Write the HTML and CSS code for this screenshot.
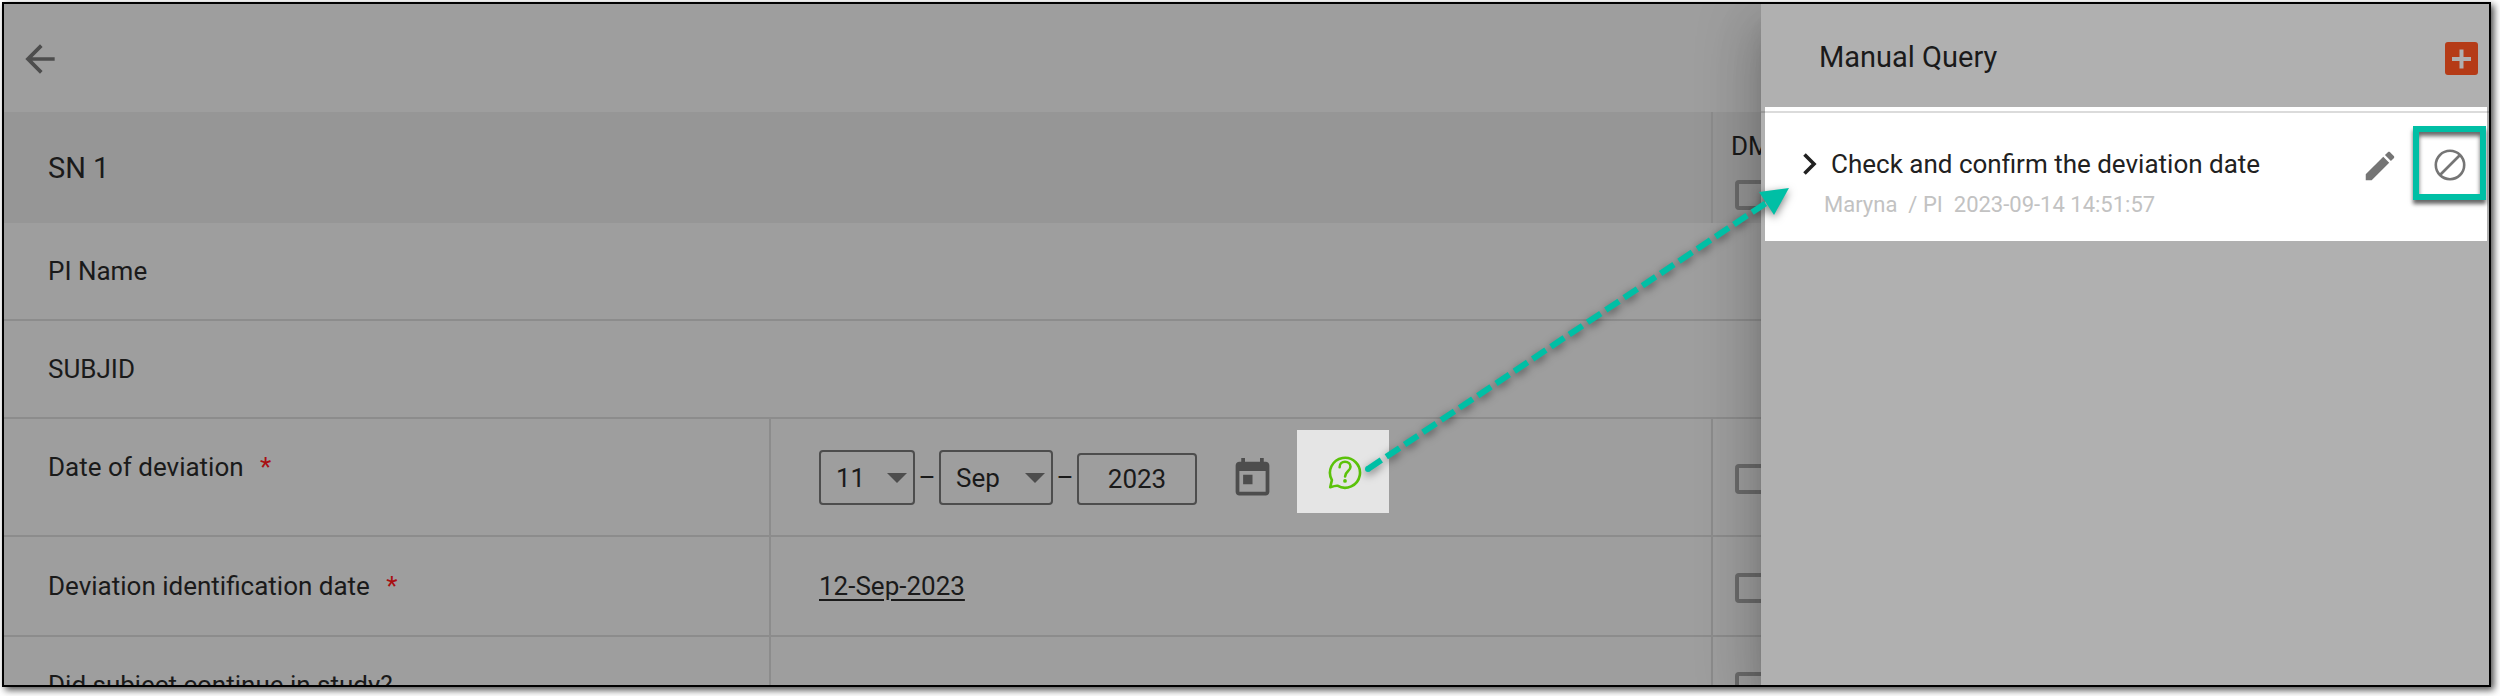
FILE: index.html
```
<!DOCTYPE html>
<html lang="en">
<head>
    <meta charset="UTF-8">
    <meta name="viewport" content="width=device-width, initial-scale=1.0">
    <title>Manual Query</title>
    <link rel="stylesheet" href="styles.css">
</head>
<body>

    <div class="frame">
        <!-- Top bar -->
        <header class="topbar">
            <button class="icon-btn" aria-label="Back">
                <svg width="44" height="44" viewBox="0 0 24 24"><path fill="#4d4d4d" d="M20 11H7.83l5.59-5.59L12 4l-8 8 8 8 1.41-1.41L7.83 13H20v-2z"/></svg>
            </button>
        </header>

        <!-- Form -->
        <table class="form">
            <colgroup>
                <col class="col-label">
                <col>
                <col class="col-dm">
            </colgroup>
            <tr class="row-head">
                <th colspan="2" class="section">SN 1</th>
                <th class="line dm">
                    <label for="dmAll">DM</label>
                    <input type="checkbox" id="dmAll">
                </th>
            </tr>
            <tr>
                <td colspan="3">PI Name</td>
            </tr>
            <tr>
                <td colspan="3">SUBJID</td>
            </tr>
            <tr class="row-date">
                <td class="top">Date of deviation <span class="required">*</span></td>
                <td class="line value">
                    <div class="date-row">
                        <div class="date">
                            <div class="select day">
                                <select aria-label="Day"><option>11</option></select>
                                <svg width="20" height="10" viewBox="0 0 20 10"><path fill="#4d4d4d" d="M0 0h20L10 10z"/></svg>
                            </div>
                            <span class="dash">–</span>
                            <div class="select month">
                                <select aria-label="Month"><option>Sep</option></select>
                                <svg width="20" height="10" viewBox="0 0 20 10"><path fill="#4d4d4d" d="M0 0h20L10 10z"/></svg>
                            </div>
                            <span class="dash">–</span>
                            <input class="year" type="text" value="2023" aria-label="Year">
                        </div>
                        <button class="icon-btn calendar" aria-label="Open calendar">
                            <svg width="45" height="45" viewBox="0 0 24 24"><path fill="#4d4d4d" d="M19 3h-1V1h-2v2H8V1H6v2H5c-1.11 0-1.99.9-1.99 2L3 19c0 1.1.89 2 2 2h14c1.1 0 2-.9 2-2V5c0-1.1-.9-2-2-2zm0 16H5V8h14v11zM7 10h5v5H7z"/></svg>
                        </button>
                        <button class="icon-btn query" aria-label="Query">
                            <svg width="36" height="36" viewBox="0 0 36 36" fill="none" stroke="#5bc20a" stroke-width="2.6" stroke-linecap="round" stroke-linejoin="round">
                                <path d="M3.2 33.2L4.9 26.1A15 15 0 1 1 10.4 31.7Q8.5 31.5 3.2 33.2z"/>
                                <path d="M12.6 13.2c0-3.4 2.4-5.4 5.4-5.4 3.2 0 5.5 2.1 5.500 5 0 4.400-5.400 4.700-5.400 9.600"/>
                                <circle cx="18" cy="26.9" r="1.9" fill="#5bc20a" stroke="none"/>
                            </svg>
                        </button>
                    </div>
                </td>
                <td class="line dm"><input type="checkbox" aria-label="DM Date of deviation"></td>
            </tr>
            <tr class="row-tall">
                <td>Deviation identification date <span class="required">*</span></td>
                <td class="line value"><a href="#">12-Sep-2023</a></td>
                <td class="line dm"><input type="checkbox" aria-label="DM Deviation identification date"></td>
            </tr>
            <tr>
                <td>Did subject continue in study?</td>
                <td class="line value"></td>
                <td class="line dm"><input type="checkbox" aria-label="DM Did subject continue in study"></td>
            </tr>
        </table>

        <!-- Query drawer -->
        <aside class="drawer">
            <div class="drawer-head">
                <h2>Manual Query</h2>
                <button class="icon-btn add" aria-label="Add query">
                    <svg width="33" height="33" viewBox="0 0 33 33"><rect width="33" height="33" rx="3" fill="#b53b17"/><path stroke="#b0b0b0" stroke-width="4" d="M7 17h19M16.5 7.5v19"/></svg>
                </button>
            </div>
            <div class="query-item">
                <button class="icon-btn expand" aria-label="Expand">
                    <svg width="14" height="22" viewBox="0 0 14 22"><path fill="none" stroke="#212121" stroke-width="3.6" d="M1.5 1.5L11 11l-9.5 9.5"/></svg>
                </button>
                <div class="query-text">
                    <div class="query-title">Check and confirm the deviation date</div>
                    <div class="query-meta"><span>Maryna</span><span>/ PI</span><span>2023-09-14 14:51:57</span></div>
                </div>
                <button class="icon-btn edit" aria-label="Edit query">
                    <svg width="38" height="38" viewBox="0 0 24 24"><path fill="#757575" d="M3 17.25V21h3.750L17.81 9.940l-3.750-3.750L3 17.250zM20.710 7.040c.39-.39.39-1.020 0-1.410l-2.340-2.340c-.39-.39-1.020-.39-1.410 0l-1.830 1.830 3.750 3.750 1.830-1.830z"/></svg>
                </button>
                <button class="icon-btn cancel" aria-label="Cancel query">
                    <svg width="32" height="32" viewBox="0 0 32 32" fill="none" stroke="#757575" stroke-width="2.6"><circle cx="16" cy="16" r="14.2"/><path d="M6 26L26 6"/></svg>
                </button>
            </div>
        </aside>

        <!-- Pointer from the query icon to the drawer -->
        <svg class="pointer" width="440" height="300" viewBox="0 0 440 300">
            <path d="M9 288L407 22" fill="none" stroke="#00bfa5" stroke-width="6" stroke-dasharray="16 6"/>
            <circle cx="9" cy="288" r="3" fill="#00bfa5"/>
            <path d="M430 7L400 11L415 34z" fill="#00bfa5"/>
        </svg>
    </div>

</body>
</html>
```

FILE: styles.css
```
* {
    box-sizing: border-box;
}
body {
    font-family: Roboto, sans-serif;
    font-size: 26px;
    line-height: 32px;
    color: #1a1a1a;
    background-color: white;
    margin: 0;
    padding: 2px 9px 9px 2px;
    height: 100vh;
    overflow: hidden;
}
.frame {
    position: relative;
    height: 100%;
    overflow: hidden;
    background-color: #9e9e9e;
    border: 2px solid #000;
    box-shadow: 3px 3px 7px rgba(0, 0, 0, 0.7);
}
.icon-btn {
    display: flex;
    align-items: center;
    justify-content: center;
    padding: 0;
    border: none;
    background: none;
    cursor: pointer;
}
.topbar {
    display: flex;
    align-items: center;
    height: 108px;
    padding: 2px 14px 0;
}

/* Form table */
.form {
    width: 100%;
    table-layout: fixed;
    border-spacing: 0;
}
.col-label {
    width: 765px;
}
.col-dm {
    width: 778px;
}
tr {
    height: 98px;
}
.row-head {
    height: 111px;
    background-color: #969696;
}
.row-date {
    height: 118px;
}
.row-tall {
    height: 100px;
}
th, td {
    padding: 0 0 0 44px;
    text-align: left;
    font-weight: normal;
    border-bottom: 2px solid #8c8c8c;
}
th {
    border-bottom: none;
}
.line {
    border-left: 2px solid #8c8c8c;
}
.section {
    font-size: 29px;
}
.top {
    vertical-align: top;
    padding-top: 32px;
}
.value {
    padding-left: 48px;
}
.dm {
    padding: 4px 0 0 18px;
}
.dm label {
    display: block;
    margin-bottom: 18px;
}
.required {
    margin-left: 10px;
    color: #a80f12;
}
a {
    color: inherit;
    text-underline-offset: 4px;
    text-decoration-thickness: 2px;
}
input[type="checkbox"] {
    appearance: none;
    display: block;
    width: 30px;
    height: 30px;
    margin: 0 0 0 4px;
    border: 4px solid #6b6b6b;
    border-radius: 4px;
}

/* Date fields */
.date-row {
    display: flex;
    align-items: center;
    padding-bottom: 11px;
}
.date {
    display: flex;
    align-items: flex-end;
    padding-top: 12px;
}
.select {
    position: relative;
}
.select svg {
    position: absolute;
    right: 8px;
    top: 23px;
    pointer-events: none;
}
select, .year {
    display: block;
    appearance: none;
    width: 100%;
    height: 55px;
    padding: 0 15px;
    border: 2px solid #4d4d4d;
    border-radius: 4px;
    background: none;
    color: inherit;
    font: inherit;
}
.day {
    width: 96px;
}
.month {
    width: 114px;
}
.year {
    width: 120px;
    height: 52px;
    padding: 0;
    text-align: center;
}
.dash {
    width: 24px;
    text-align: center;
    padding-bottom: 12px;
}
.calendar {
    margin: 14px 22px 0 33px;
}
.query {
    width: 92px;
    height: 83px;
    padding-left: 4px;
    background-color: #e5e5e5;
}

/* Drawer */
.drawer {
    position: absolute;
    top: 0;
    right: 0;
    bottom: 0;
    width: 728px;
    background-color: #b0b0b0;
    box-shadow: 0 16px 20px -10px rgba(0, 0, 0, 0.2), 0 32px 48px 4px rgba(0, 0, 0, 0.14), 0 12px 60px 10px rgba(0, 0, 0, 0.12);
}
.drawer-head {
    display: flex;
    align-items: center;
    justify-content: space-between;
    height: 103px;
    padding: 2px 11px 0 58px;
}
.drawer-head h2 {
    margin: 0;
    font-size: 29px;
    font-weight: normal;
}
.add {
    padding-top: 4px;
}
.query-item {
    position: relative;
    display: flex;
    align-items: flex-start;
    height: 134px;
    margin: 0 2px 0 4px;
    padding: 19px 1px 0 38px;
    background-color: white;
}
.query-item::before {
    content: "";
    position: absolute;
    top: 4px;
    left: -4px;
    right: -2px;
    height: 2px;
    background-color: rgba(0, 0, 0, 0.14);
}
.expand {
    margin-top: 27px;
}
.query-text {
    flex: 1;
    padding-top: 22px;
}
.query-title {
    padding-left: 14px;
    color: #212121;
}
.query-meta {
    display: flex;
    gap: 11px;
    margin-top: 9px;
    padding-left: 7px;
    font-size: 22px;
    color: #c2c2c2;
}
.edit {
    margin: 21px 14px 0 0;
}
.cancel {
    width: 73px;
    height: 74px;
    padding-top: 4px;
    border: 6px solid #00bfa5;
    box-shadow: 0 4px 4px rgba(0, 0, 0, 0.6), inset 0 4px 4px rgba(0, 0, 0, 0.6);
}
.pointer {
    position: absolute;
    right: 690px;
    top: 177px;
    filter: drop-shadow(0 3px 4px rgba(0, 0, 0, 0.5));
}
```
